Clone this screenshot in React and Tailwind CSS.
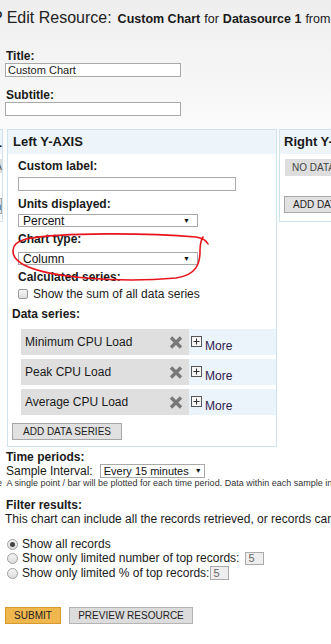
import React from 'react';

const series = ['Minimum CPU Load', 'Peak CPU Load', 'Average CPU Load'];

const Label = ({ children, className = '' }) => (
    <div className={`text-[12px] font-bold leading-[14px] text-[#1a1a1a] ${className}`}>{children}</div>
);

const Select = ({ value, className = '', small = false }) => (
    <div className={`flex items-center border border-[#a9a9a9] bg-white leading-[12px] text-[#111] ${small ? 'text-[11px]' : 'text-[12px]'} ${className}`}>
        <span>{value}</span>
        <span className="text-[7px]">▼</span>
    </div>
);

const CrossIcon = () => (
    <svg width="14" height="13" viewBox="0 0 14 13">
        <path d="M2 1.5 L12 11.5 M12 1.5 L2 11.5" stroke="#787878" strokeWidth="3.4" />
    </svg>
);

const PlusBox = () => (
    <svg width="11" height="11" viewBox="0 0 11 11">
        <rect x="0.5" y="0.5" width="10" height="10" fill="#f7f7f7" stroke="#555" />
        <path d="M2.5 5.5 H8.5 M5.5 2.5 V8.5" stroke="#333" strokeWidth="1" />
    </svg>
);

const Radio = ({ checked }) => (
    <span className="flex h-[11px] w-[11px] items-center justify-center rounded-full border border-[#a0a0a0] bg-[linear-gradient(to_bottom,#f4f4f4,#dcdcdc)]">
        {checked && <span className="h-[5px] w-[5px] rounded-full bg-[#444]" />}
    </span>
);

const SeriesRow = ({ name }) => (
    <div className="ml-[9px] flex h-[26px]">
        <div className="flex w-[168px] items-center justify-between bg-[#dfdfdf] pl-[4px] pr-[6px] text-[12px] text-[#1a1a1a]">
            <span>{name}</span>
            <CrossIcon />
        </div>
        <div className="flex flex-1 bg-[#ecf4fb] pl-[2px] pt-[7px]">
            <PlusBox />
            <span className="ml-[3px] mt-[3px] text-[12px] leading-[14px] text-[#2e2150]">More</span>
        </div>
    </div>
);

const App = () => {
    return (
        <div className="relative h-[644px] w-[331px] overflow-hidden bg-[linear-gradient(to_bottom,#eeeeee,#ffffff_170px)] pl-[5px] font-['Liberation_Sans',Arial,sans-serif] text-[#1a1a1a]">
            <div className="mt-[8px] flex h-[20px] items-baseline whitespace-nowrap leading-[20px]">
                <span className="-ml-[13px] mr-[4px] text-[16px]">P</span>
                <span className="text-[16px] text-[#222]">Edit Resource:</span>
                <span className="ml-[6px] text-[12.5px] font-bold">Custom Chart</span>
                <span className="ml-[4px] text-[12.5px]">for</span>
                <span className="ml-[4px] text-[12.5px] font-bold">Datasource 1</span>
                <span className="ml-[4px] text-[12.5px]">from</span>
                <span className="ml-[3px] text-[12.5px] font-bold">P</span>
            </div>

            <Label className="ml-[1px] mt-[21px]">Title:</Label>
            <div className="h-[14px] w-[176px] border border-[#a9a9a9] bg-white px-[2px] text-[11px] leading-[12px]">Custom Chart</div>
            <Label className="ml-[1px] mt-[11px]">Subtitle:</Label>
            <div className="h-[14px] w-[176px] border border-[#a9a9a9] bg-white" />

            <div className="mt-[13px] flex items-start">
                <div className="-ml-[52px] h-[93px] w-[50px] shrink-0 border border-[#cfe3ef] bg-white">
                    <div className="flex h-[24px] items-end justify-end bg-[#edf5fb] text-[13px] font-bold leading-[16px]">-</div>
                    <div className="mt-[5px] flex h-[14px] items-center justify-end bg-[#dedede] text-[10px] text-[#555]">A</div>
                    <div className="mt-[25px] flex h-[16px] items-center justify-end border border-[#a9a9a9] bg-[#e2e2e2] text-[10px]">n</div>
                </div>

                <div className="ml-[4px] w-[270px] shrink-0 border border-[#cfe3ef] bg-white">
                    <div className="flex h-[24px] items-center bg-[#edf5fb] pl-[5px] text-[13px] font-bold">Left Y-AXIS</div>
                    <div className="pb-[6px] pl-[4px] pt-[5px]">
                        <div className="pl-[6px]">
                            <Label>Custom label:</Label>
                            <div className="mt-[4px] h-[14px] w-[218px] border border-[#a9a9a9] bg-white" />
                            <Label className="mt-[6px]">Units displayed:</Label>
                            <Select value="Percent" className="mt-[3px] h-[13px] w-[180px] justify-between pl-[4px] pr-[7px]" />
                            <Label className="mt-[5px]">Chart type:</Label>
                            <Select value="Column" className="mt-[6px] h-[13px] w-[180px] justify-between pl-[4px] pr-[7px]" />
                            <Label className="mt-[5px]">Calculated series:</Label>
                            <div className="mt-[3px] flex h-[14px] items-center text-[12px]">
                                <span className="h-[10px] w-[10px] rounded-[2px] border border-[#999] bg-[linear-gradient(to_bottom,#f6f6f6,#dedede)]" />
                                <span className="ml-[5px]">Show the sum of all data series</span>
                            </div>
                        </div>
                        <Label className="mt-[6px]">Data series:</Label>
                        <div className="mt-[8px] flex flex-col gap-[4px]">
                            {series.map((name) => (
                                <SeriesRow key={name} name={name} />
                            ))}
                        </div>
                        <div className="mt-[8px] flex h-[17px] w-[110px] items-center justify-center border border-[#a6a6a6] bg-[#e1e1e1] text-[10px] text-[#222]">
                            ADD DATA SERIES
                        </div>
                    </div>
                </div>

                <div className="ml-[2px] h-[93px] w-[120px] shrink-0 border border-[#cfe3ef] bg-white">
                    <div className="flex h-[24px] items-center whitespace-nowrap bg-[#edf5fb] pl-[4px] text-[13px] font-bold">Right Y-AXIS</div>
                    <div className="ml-[5px] mt-[5px] flex h-[17px] w-[90px] items-center bg-[#dedede] pl-[7px] text-[10px] text-[#444]">NO DATA SERIES</div>
                    <div className="ml-[4px] mt-[20px] flex h-[17px] w-[110px] items-center border border-[#a6a6a6] bg-[#e1e1e1] pl-[8px] text-[10px] text-[#222]">ADD DATA SERIES</div>
                </div>
            </div>

            <Label className="ml-[1px] mt-[3px]">Time periods:</Label>
            <div className="ml-[1px] flex h-[14px] items-center text-[12px] whitespace-nowrap">
                <span>Sample Interval:</span>
                <Select small value="Every 15 minutes" className="ml-[7px] h-[14px] w-[105px] gap-[6px] pl-[3px]" />
            </div>
            <div className="-ml-[8px] whitespace-nowrap text-[9px] leading-[11px] text-[#333]">
                e&nbsp; A single point / bar will be plotted for each time period. Data within each sample interval
            </div>

            <Label className="ml-[1px] mt-[9px]">Filter results:</Label>
            <div className="-ml-[6px] flex items-center whitespace-nowrap text-[12px] leading-[14px]">
                <span className="mr-[6px] h-[5px] w-[2px] bg-[#3a6ea5]" />
                This chart can include all the records retrieved, or records can be limited
            </div>

            <div className="ml-[2px] mt-[11px] flex flex-col text-[12px]">
                <div className="flex h-[14px] items-center gap-[4px]">
                    <Radio checked />
                    <span>Show all records</span>
                </div>
                <div className="flex h-[14px] items-center gap-[4px]">
                    <Radio />
                    <span>Show only limited number of top records:</span>
                    <span className="ml-[2px] flex h-[13px] w-[19px] items-center border border-[#aaa] bg-[#eeeeee] pl-[2px] text-[11px] text-[#666]">5</span>
                </div>
                <div className="flex h-[16px] items-center gap-[4px]">
                    <Radio />
                    <span>Show only limited % of top records:</span>
                    <span className="-ml-[3px] flex h-[14px] w-[19px] items-center border border-[#aaa] bg-[#eeeeee] pl-[2px] text-[11px] text-[#666]">5</span>
                </div>
            </div>

            <div className="mt-[26px] flex gap-[8px]">
                <div className="flex h-[17px] w-[56px] items-center justify-center border border-[#d89a30] bg-[#f1b74f] text-[10px] text-[#222]">SUBMIT</div>
                <div className="flex h-[17px] w-[124px] items-center justify-center border border-[#b4b4b4] bg-[#dcdcdc] text-[10px] text-[#222]">PREVIEW RESOURCE</div>
            </div>

            <svg className="pointer-events-none absolute left-0 top-0" width="331" height="644" viewBox="0 0 331 644">
                <path
                    d="M208 244 C206 240 203 238 196 237 C150 233 62 232 26 239 C9 243 9 257 24 265 C50 278 120 283 176 278 C197 275 200 263 200 251 C200 245 201 240 203 237"
                    fill="none"
                    stroke="#e8141c"
                    strokeWidth="1.6"
                    strokeLinecap="round"
                />
            </svg>
        </div>
    );
};

export default App;
